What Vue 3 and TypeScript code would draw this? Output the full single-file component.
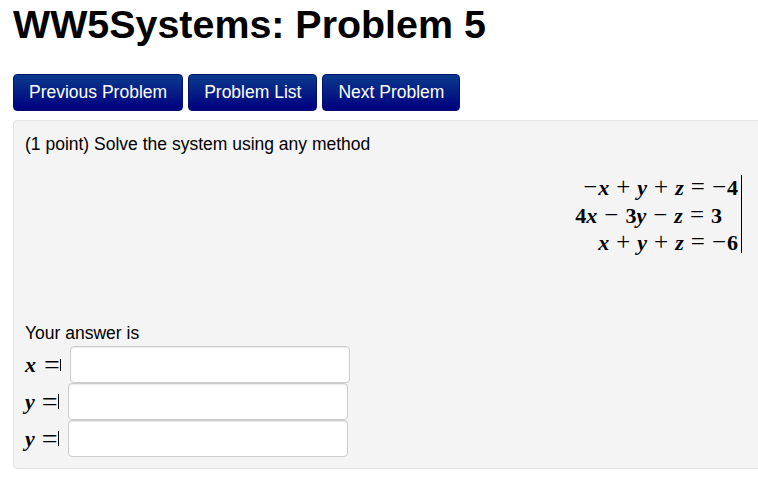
<script setup lang="ts">
const buttons = ['Previous Problem', 'Problem List', 'Next Problem']

const answers = [
  { name: 'x', first: true },
  { name: 'y', first: false },
  { name: 'y', first: false },
]
</script>

<template>
  <div class="page">
    <h1>WW5Systems: Problem 5</h1>
    <div class="nav">
      <button v-for="b in buttons" :key="b" class="nav-btn">{{ b }}</button>
    </div>
    <div class="problem">
      <p class="intro">(1 point) Solve the system using any method</p>
      <div class="system">
        <div class="eq-col">
          <div class="eq"><span class="op first">−</span><i>x</i><span class="op">+</span><i>y</i><span class="op">+</span><i>z</i><span class="op">=</span><span class="op neg">−</span><b>4</b></div>
          <div class="eq eq2"><b>4</b><i>x</i><span class="op">−</span><b>3</b><i>y</i><span class="op">−</span><i>z</i><span class="op">=</span><b>3</b></div>
          <div class="eq"><i>x</i><span class="op">+</span><i>y</i><span class="op">+</span><i>z</i><span class="op">=</span><span class="op neg">−</span><b>6</b></div>
        </div>
        <div class="rule"></div>
      </div>
      <p class="answer-label">Your answer is</p>
      <div class="answers">
        <div v-for="(a, i) in answers" :key="i" class="answer-row">
          <span class="var-label" :class="{ wide: a.first }"><i>{{ a.name }}</i><span class="eq-sign">=</span><span class="bar" :class="{ short: a.first }"></span></span>
          <input type="text" class="answer" />
        </div>
      </div>
    </div>
  </div>
</template>

<style scoped>
.page {
  font-family: "Liberation Sans", Arial, sans-serif;
  color: #000;
  padding-left: 13px;
  width: 745px;
  height: 483px;
  overflow: hidden;
}

h1 {
  margin: 0;
  padding-top: 2px;
  font-size: 39.4px;
  line-height: 44px;
  font-weight: 700;
}

.nav {
  display: flex;
  gap: 5px;
  margin-top: 28px;
}

.nav-btn {
  height: 37px;
  padding: 0 15px;
  border: 1px solid #00106b;
  border-radius: 4px;
  background: linear-gradient(to bottom, #0a3a8c, #00007f);
  color: #fff;
  font-family: inherit;
  font-size: 17.5px;
}

.problem {
  margin-top: 9px;
  height: 349px;
  width: 760px;
  box-sizing: border-box;
  padding: 13px 11px 0;
  background: #f4f4f4;
  border: 1px solid #e4e4e4;
  border-radius: 4px;
}

.intro,
.answer-label {
  margin: 0;
  font-size: 17.5px;
  line-height: 20px;
}

.system {
  display: flex;
  justify-content: flex-end;
  margin-top: 21px;
  width: 717px;
  height: 85px;
}

.eq-col {
  display: flex;
  flex-direction: column;
  align-items: flex-end;
  font-family: "Liberation Serif", serif;
  font-size: 22px;
  font-weight: 700;
  line-height: 24px;
}

.eq {
  display: flex;
  align-items: baseline;
  height: 27.5px;
  white-space: nowrap;
}

.eq2 {
  padding-right: 16px;
}

.op {
  margin: 0 7px;
  font-size: 25px;
  font-weight: 400;
  line-height: 24px;
}

.op.first {
  margin: 0 1px 0 0;
}

.op.neg {
  margin: 0 1px 0 0;
}

.rule {
  width: 1px;
  height: 78px;
  margin-left: 3px;
  background: #000;
}

.answer-label {
  margin-top: 63px;
}

.answers {
  margin-top: 3px;
}

.answer-row {
  display: flex;
  align-items: center;
  height: 37px;
}

.var-label {
  display: flex;
  align-items: center;
  width: 43px;
  font-family: "Liberation Serif", serif;
  font-size: 22px;
  font-weight: 700;
}

.var-label.wide {
  width: 45px;
}

.eq-sign {
  margin-left: 7px;
  font-size: 28px;
  font-weight: 400;
  line-height: 24px;
}

.wide .eq-sign {
  margin-left: 8px;
}

.bar {
  width: 1px;
  height: 15px;
  background: #000;
}

.bar.short {
  height: 12px;
}

.answer {
  box-sizing: border-box;
  width: 280px;
  height: 37px;
  border: 1px solid #ccc;
  border-radius: 4px;
  background: #fff;
  box-shadow: inset 0 1px 1px rgba(0, 0, 0, 0.08);
  outline: none;
}
</style>
